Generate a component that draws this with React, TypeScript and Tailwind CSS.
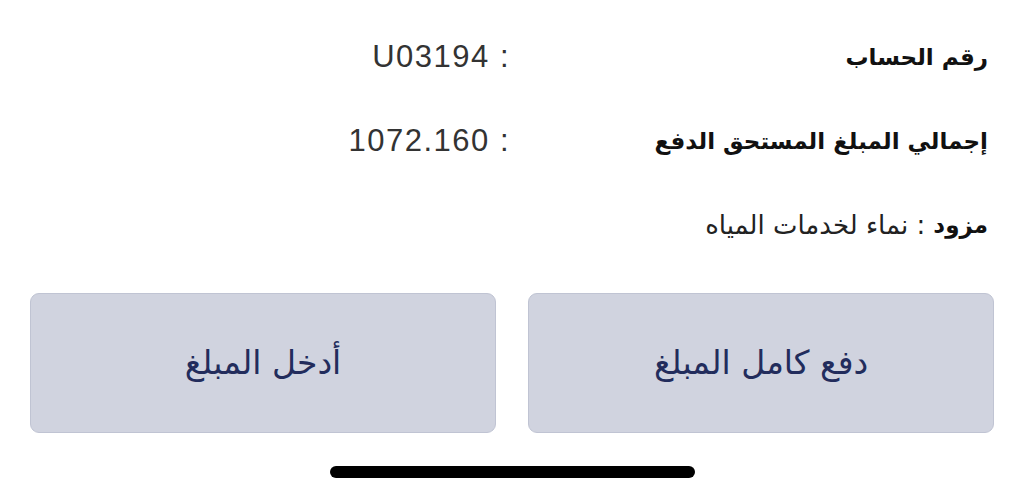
import React from "react";

const arabic = "font-['DejaVu_Sans','Noto_Sans',sans-serif]";
const latin = "font-['Liberation_Sans','Arimo',sans-serif]";

function InfoRow({ label, value }: { label: string; value: string }) {
  return (
    <div className="flex h-[84px] items-center">
      <div className={`w-[512px] pr-[2px] text-right text-[31px] tracking-[1.5px] text-[#333] ${latin}`}>
        <span dir="ltr">{value} :</span>
      </div>
      <div dir="rtl" className={`flex-1 pr-[36px] text-right text-[23px] font-bold text-[#111] ${arabic}`}>
        {label}
      </div>
    </div>
  );
}

function ActionButton({ children }: { children: React.ReactNode }) {
  return (
    <button
      dir="rtl"
      className={`flex h-[140px] items-center justify-center rounded-[9px] border border-[#c0c4d3] bg-[#d0d3df] text-[33px] text-[#222c5c] ${arabic}`}
    >
      {children}
    </button>
  );
}

export default function App() {
  return (
    <div className="flex h-[497px] w-full flex-col bg-white">
      <div className="pt-[15px]">
        <InfoRow label="رقم الحساب" value="U03194" />
        <InfoRow label="إجمالي المبلغ المستحق الدفع" value="1072.160" />
        <div dir="rtl" className={`flex h-[84px] items-center pr-[36px] text-[26px] text-[#222] ${arabic}`}>
          <span className="text-[23px] font-bold text-[#111]">مزود</span>
          <span className="mr-[8px]">: نماء لخدمات المياه</span>
        </div>
      </div>
      <div className="mt-[26px] grid grid-cols-2 gap-[32px] px-[30px]">
        <ActionButton>أدخل المبلغ</ActionButton>
        <ActionButton>دفع كامل المبلغ</ActionButton>
      </div>
      <div className="mt-[33px] flex justify-center">
        <div className="h-[12px] w-[365px] rounded-full bg-black" />
      </div>
    </div>
  );
}
